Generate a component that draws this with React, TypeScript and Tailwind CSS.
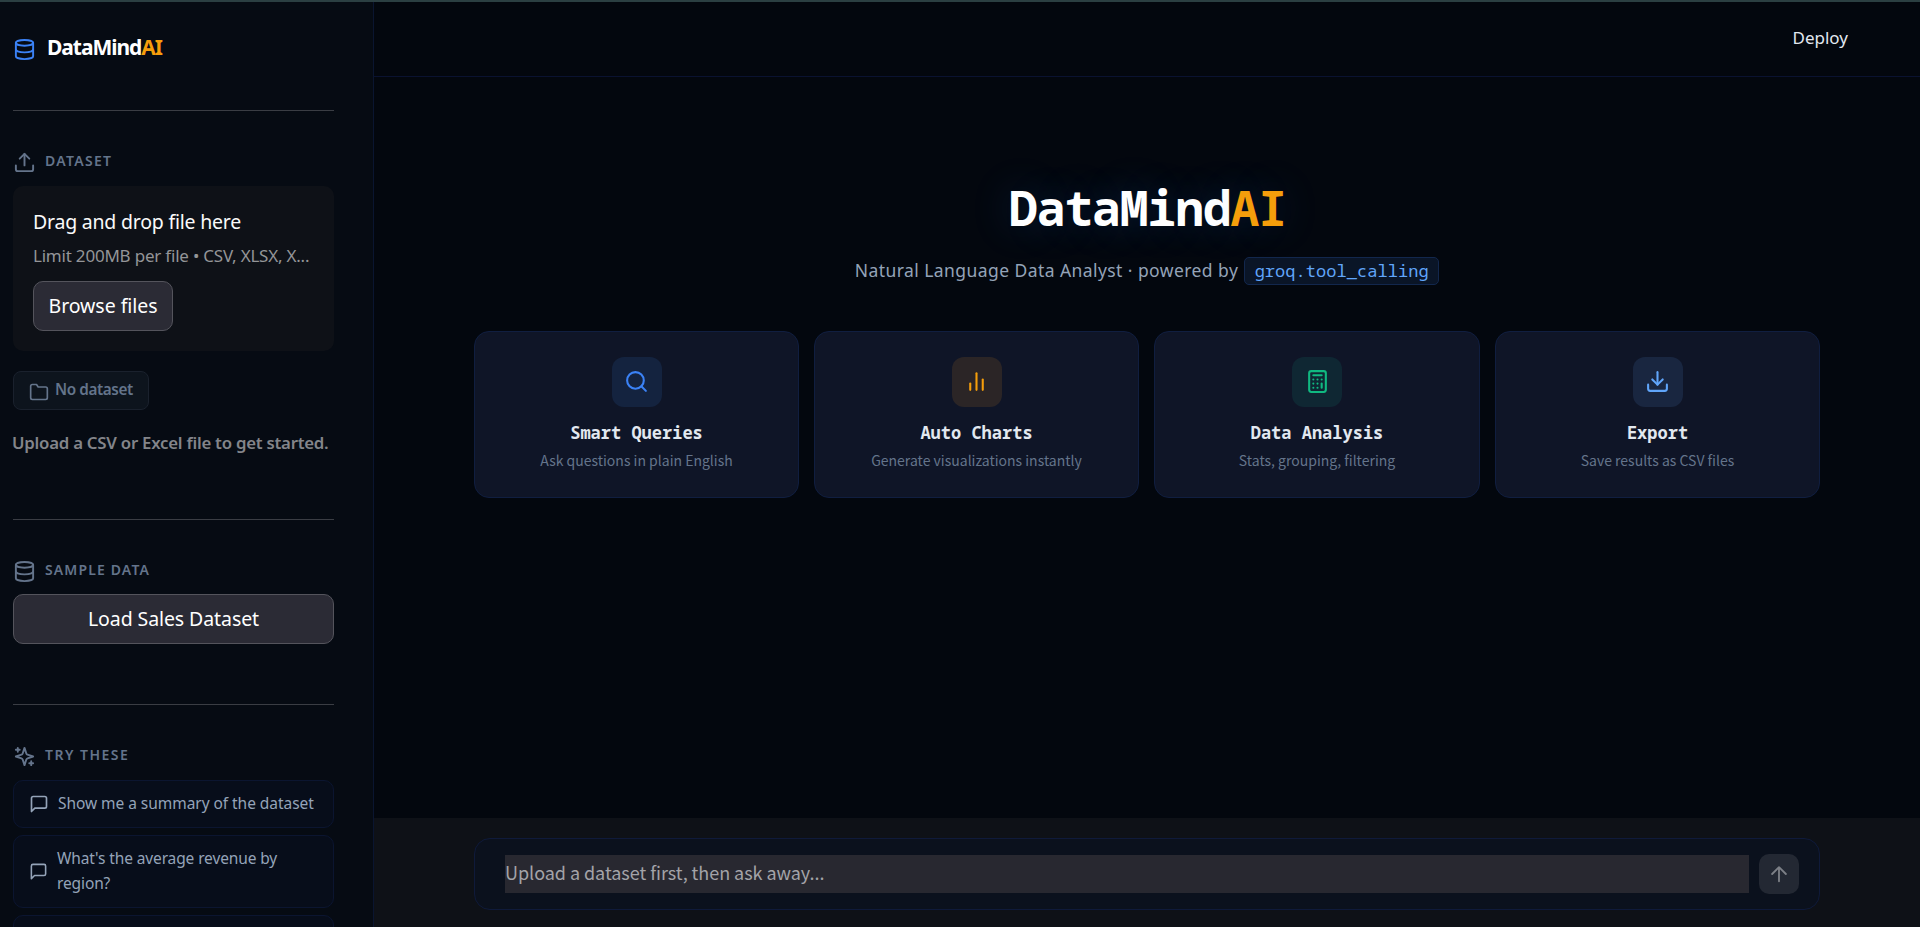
import type { ReactNode } from "react";

type IconProps = { className?: string; children?: ReactNode };

function Icon({ className, children }: IconProps) {
  return (
    <svg
      viewBox="0 0 24 24"
      fill="none"
      stroke="currentColor"
      strokeWidth="2"
      strokeLinecap="round"
      strokeLinejoin="round"
      className={className}
    >
      {children}
    </svg>
  );
}

const DatabaseIcon = ({ className }: IconProps) => (
  <Icon className={className}>
    <ellipse cx="12" cy="5" rx="9" ry="3" />
    <path d="M21 12c0 1.66-4 3-9 3s-9-1.34-9-3" />
    <path d="M3 5v14c0 1.66 4 3 9 3s9-1.34 9-3V5" />
  </Icon>
);

const UploadIcon = ({ className }: IconProps) => (
  <Icon className={className}>
    <path d="M21 15v4a2 2 0 0 1-2 2H5a2 2 0 0 1-2-2v-4" />
    <polyline points="17 8 12 3 7 8" />
    <line x1="12" y1="3" x2="12" y2="15" />
  </Icon>
);

const FolderIcon = ({ className }: IconProps) => (
  <Icon className={className}>
    <path d="M22 19a2 2 0 0 1-2 2H4a2 2 0 0 1-2-2V5a2 2 0 0 1 2-2h5l2 3h9a2 2 0 0 1 2 2z" />
  </Icon>
);

const SparklesIcon = ({ className }: IconProps) => (
  <Icon className={className}>
    <path d="m12 3-1.912 5.813a2 2 0 0 1-1.275 1.275L3 12l5.813 1.912a2 2 0 0 1 1.275 1.275L12 21l1.912-5.813a2 2 0 0 1 1.275-1.275L21 12l-5.813-1.912a2 2 0 0 1-1.275-1.275L12 3Z" />
    <path d="M5 3v4M3 5h4M19 17v4M17 19h4" />
  </Icon>
);

const MessageIcon = ({ className }: IconProps) => (
  <Icon className={className}>
    <path d="M21 15a2 2 0 0 1-2 2H7l-4 4V5a2 2 0 0 1 2-2h14a2 2 0 0 1 2 2z" />
  </Icon>
);

const SearchIcon = ({ className }: IconProps) => (
  <Icon className={className}>
    <circle cx="11" cy="11" r="8" />
    <line x1="21" y1="21" x2="16.65" y2="16.65" />
  </Icon>
);

const BarsIcon = ({ className }: IconProps) => (
  <Icon className={className}>
    <line x1="18" y1="20" x2="18" y2="10" />
    <line x1="12" y1="20" x2="12" y2="4" />
    <line x1="6" y1="20" x2="6" y2="14" />
  </Icon>
);

const CalculatorIcon = ({ className }: IconProps) => (
  <Icon className={className}>
    <rect x="4" y="2" width="16" height="20" rx="2" />
    <line x1="8" y1="6" x2="16" y2="6" />
    <line x1="16" y1="14" x2="16" y2="18" />
    <path d="M16 10h.01M12 10h.01M8 10h.01M12 14h.01M8 14h.01M12 18h.01M8 18h.01" />
  </Icon>
);

const DownloadIcon = ({ className }: IconProps) => (
  <Icon className={className}>
    <path d="M21 15v4a2 2 0 0 1-2 2H5a2 2 0 0 1-2-2v-4" />
    <polyline points="7 10 12 15 17 10" />
    <line x1="12" y1="15" x2="12" y2="3" />
  </Icon>
);

const ArrowUpIcon = ({ className }: IconProps) => (
  <Icon className={className}>
    <path d="M12 20V4.500M4.500 12l7.500-7.500 7.500 7.500" />
  </Icon>
);

function SectionHeading({ icon, children, tracking }: { icon: ReactNode; children: ReactNode; tracking: string }) {
  return (
    <div className="mt-[38px] flex h-[23px] items-center gap-[9px] text-[#64748b]">
      {icon}
      <span className={`text-[14px] font-semibold ${tracking}`}>{children}</span>
    </div>
  );
}

const Divider = ({ className }: { className: string }) => (
  <div className={`h-px shrink-0 bg-[#3a3d44] ${className}`} />
);

function Sidebar() {
  return (
    <aside className="flex w-[374px] shrink-0 flex-col overflow-hidden border-r border-[#0a1530] bg-[#060b13] pl-[13px] pr-[39px]">
      <div className="mt-[22px] flex h-[46px] shrink-0 items-center gap-[11px]">
        <DatabaseIcon className="mt-[5px] size-[23px] text-[#3b82f6]" />
        <span className="pt-[2px] text-[21px] font-bold tracking-[-1.05px] text-white">
          DataMind<span className="text-[#f59e0b]">AI</span>
        </span>
      </div>

      <Divider className="mt-10" />

      <SectionHeading icon={<UploadIcon className="mt-1 size-[23px]" />} tracking="tracking-[1.28px]">
        DATASET
      </SectionHeading>
      <div className="mt-[14px] h-[165px] shrink-0 rounded-[10px] bg-[#0e1117] px-5 pt-[22px]">
        <div className="h-[27px] text-[19.5px] leading-[27px] tracking-[-0.22px] text-[#fafafa]">Drag and drop file here</div>
        <div className="mt-2 h-[25px] whitespace-nowrap text-[17px] leading-[25px] tracking-[-0.21px] text-[#949598]">
          Limit 200MB per file • CSV, XLSX, X...
        </div>
        <button className="mt-[13px] flex h-[50px] w-[140px] items-center justify-center rounded-[10px] border border-[#54545c] bg-[#2b2b35] text-[19.5px] tracking-[-0.05px] text-white">
          Browse files
        </button>
      </div>

      <div className="mt-5 flex h-[39px] w-[136px] shrink-0 items-center rounded-lg border border-[#1a212d] bg-[#0d141d] pl-[15px] text-[#64748b]">
        <FolderIcon className="mt-[2px] size-5" />
        <span className="mb-[2px] ml-[6px] whitespace-nowrap text-[15.3px] font-semibold tracking-[-0.42px]">No dataset</span>
      </div>
      <p className="-ml-px mt-5 h-[25px] shrink-0 whitespace-nowrap text-[16.8px] font-semibold leading-[25px] tracking-[-0.24px] text-[#83858a]">
        Upload a CSV or Excel file to get started.
      </p>

      <Divider className="mt-16" />

      <SectionHeading icon={<DatabaseIcon className="mt-1 size-[23px]" />} tracking="tracking-[1.13px]">
        SAMPLE DATA
      </SectionHeading>
      <button className="mt-[13px] flex h-[50px] shrink-0 items-center justify-center rounded-[10px] border border-[#54545c] bg-[#2b2b35] text-[19.5px] tracking-[-0.09px] text-white">
        Load Sales Dataset
      </button>

      <Divider className="mt-[60px]" />

      <SectionHeading icon={<SparklesIcon className="mt-1 size-[23px]" />} tracking="tracking-[1.48px]">
        TRY THESE
      </SectionHeading>
      <div className="mt-[14px] flex shrink-0 flex-col gap-[7px] text-[15.5px] leading-[25px] text-[#94a3b8]">
        <div className="flex h-12 items-center rounded-[10px] border border-[#0b1530] bg-[#070d1a] pl-[15px]">
          <MessageIcon className="size-5 shrink-0" />
          <span className="ml-[9px] whitespace-nowrap pb-[2px] tracking-[-0.05px]">Show me a summary of the dataset</span>
        </div>
        <div className="flex h-[73px] items-center rounded-[10px] border border-[#0b1530] bg-[#070d1a] pl-[15px]">
          <MessageIcon className="size-[19px] shrink-0" />
          <span className="ml-[9px] pb-[2px] tracking-[-0.12px]">
            What's the average revenue by
            <br />
            region?
          </span>
        </div>
        <div className="h-12 rounded-[10px] border border-[#0b1530] bg-[#070d1a]" />
      </div>
    </aside>
  );
}

const features = [
  { title: "Smart Queries", text: "Ask questions in plain English", tile: "bg-[#14233f] text-[#3b82f6]", icon: <SearchIcon className="size-[25px]" /> },
  { title: "Auto Charts", text: "Generate visualizations instantly", tile: "bg-[#2b2526] text-[#f59e0b]", icon: <BarsIcon className="size-[25px]" /> },
  { title: "Data Analysis", text: "Stats, grouping, filtering", tile: "bg-[#0f2733] text-[#10b981]", icon: <CalculatorIcon className="size-[25px]" /> },
  { title: "Export", text: "Save results as CSV files", tile: "bg-[#192640] text-[#60a5fa]", icon: <DownloadIcon className="size-[25px]" /> },
];

function Hero() {
  return (
    <section className="flex flex-1 flex-col items-center pt-[101px]">
      <h1 className="h-[60px] pl-px font-['Noto_Sans_Mono','DejaVu_Sans_Mono',monospace] text-[48px] font-bold leading-[60px] tracking-[-1.12px] text-white [text-shadow:0_0_40px_rgba(59,140,235,0.24)]">
        DataMind<span className="text-[#f59e0b]">AI</span>
      </h1>
      <div className="mt-[19px] flex h-7 items-center gap-[6px] text-[17.5px] text-[#94a3b8]">
        <span className="whitespace-nowrap pb-px tracking-[0.43px]">Natural Language Data Analyst · powered by</span>
        <code className="flex h-7 w-[195px] items-center justify-center rounded-[5px] border border-[#12274d] bg-[#0a1527] font-['Noto_Sans_Mono','DejaVu_Sans_Mono',monospace] text-[17px] tracking-[0.05px] text-[#60a5fa]">
          groq.tool_calling
        </code>
      </div>
      <div className="mt-[46px] grid grid-cols-[325px_325px_326px_325px] gap-[15px]">
        {features.map((f) => (
          <article key={f.title} className="flex h-[167px] flex-col items-center rounded-[15px] border border-[#101e40] bg-[#0f1527] pt-[25px]">
            <div className={`flex size-[50px] items-center justify-center rounded-[12px] pb-px ${f.tile}`}>{f.icon}</div>
            <h2 className="mt-[14px] h-[23px] font-['Noto_Sans_Mono','DejaVu_Sans_Mono',monospace] text-[17px] font-bold leading-[23px] text-[#e2e8f0]">
              {f.title}
            </h2>
            <p className="mt-[6px] h-5 font-['Noto_Sans_CJK_SC',sans-serif] text-[14px] leading-5 text-[#64748b]">{f.text}</p>
          </article>
        ))}
      </div>
    </section>
  );
}

function ChatBar() {
  return (
    <footer className="flex h-[109px] shrink-0 justify-center bg-[#0e1117] pt-5">
      <div className="flex h-[72px] w-[1346px] items-center gap-[10px] rounded-[16px] border border-[#0f1a3a] bg-[#0b111d] pl-[30px] pr-5">
        <div className="flex h-[38px] flex-1 items-center bg-[#282830] pb-1 font-['Noto_Sans_CJK_SC',sans-serif] text-[18px] leading-[27px] tracking-[-0.04px] text-[#a3a3a8]">
          Upload a dataset first, then ask away...
        </div>
        <button className="flex size-10 items-center justify-center rounded-[10px] bg-[#232833] text-[#7d8087]">
          <ArrowUpIcon className="size-[22px]" />
        </button>
      </div>
    </footer>
  );
}

export default function App() {
  return (
    <div className="flex h-[927px] w-full flex-col overflow-hidden bg-[#03070e] font-['Noto_Sans','Open_Sans',sans-serif]">
      <div className="h-[2px] shrink-0 bg-[#2b3f42]" />
      <div className="flex min-h-0 flex-1">
        <Sidebar />
        <main className="flex min-w-0 flex-1 flex-col">
          <header className="flex h-[75px] shrink-0 items-center justify-end border-b border-[#0a1230] pb-[3px] pr-[72px] text-[17px] text-[#e2e8f0]">
            Deploy
          </header>
          <Hero />
          <ChatBar />
        </main>
      </div>
    </div>
  );
}
